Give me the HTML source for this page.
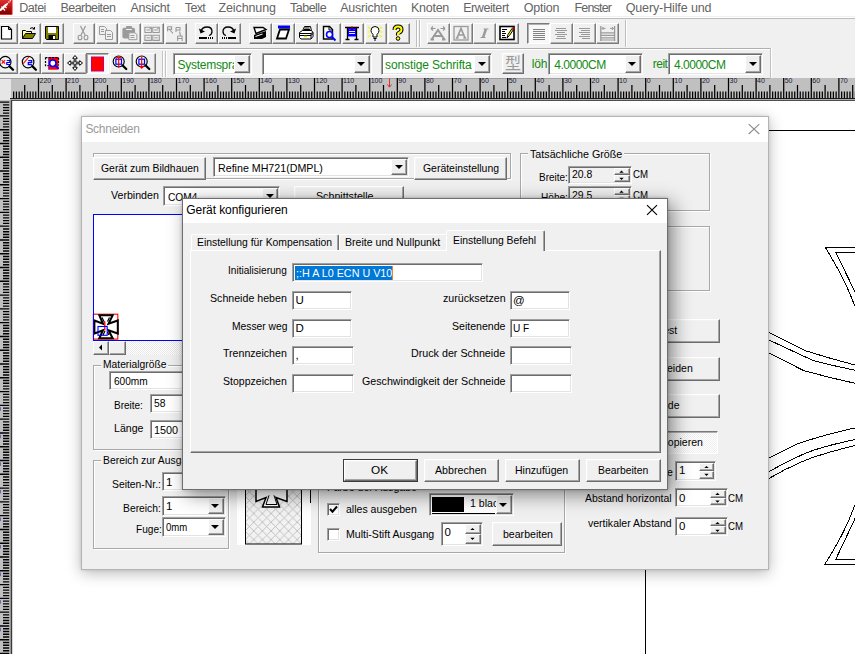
<!DOCTYPE html>
<html lang="de"><head><meta charset="utf-8"><title>Schneiden</title>
<style>
html,body{margin:0;padding:0;}
body{width:855px;height:654px;overflow:hidden;background:#fff;font-family:"Liberation Sans",sans-serif;position:relative;}
div,span,svg{position:absolute;box-sizing:border-box;}
.tb svg,.tbp svg{overflow:visible;}
.t{white-space:nowrap;display:block;transform-origin:0 0;}
.btn{background:#f0f0f0;border:1px solid;border-color:#fff #6d6d6d #6d6d6d #fff;box-shadow:inset -1px -1px 0 #a5a5a5,inset 1px 1px 0 #f4f4f4;}
.tb{background:#f0f0f0;border:1px solid;border-color:#fff #7a7a7a #7a7a7a #fff;box-shadow:inset -1px -1px 0 #b0b0b0;}
.tbp{background:#f8f8f8;border:1px solid;border-color:#7a7a7a #fff #fff #7a7a7a;box-shadow:inset 1px 1px 0 #b0b0b0;}
.sunk{background:#fff;border:1px solid;border-color:#a0a0a0 #fff #fff #a0a0a0;box-shadow:inset 1px 1px 0 #6d6d6d,inset -1px -1px 0 #e3e3e3;}
.grp{border:1px solid #a8a8a8;box-shadow:1px 1px 0 #fff, inset 1px 1px 0 #fff;}
.dd{background:#f0f0f0;border:1px solid;border-color:#fff #6d6d6d #6d6d6d #fff;box-shadow:inset -1px -1px 0 #a5a5a5;}
.dd:after{content:"";position:absolute;left:50%;top:50%;margin:-2px 0 0 -4.5px;border:4.5px solid transparent;border-top:4.5px solid #000;border-bottom:0;}
.spn:after,.nd:after{display:none;}
.clip{overflow:hidden;}
</style></head><body>

<svg width="855" height="654" viewBox="0 0 855 654" style="left:0;top:0" fill="none" stroke="#000" stroke-width="1" shape-rendering="crispEdges">
<path d="M769 130.5H855"/>
<path d="M645.5 569V654"/>
<path d="M856 247.400H825.300Q845 279 854.600 305.500"/>
<path d="M856 252.400H835.800L856 294"/>
<path d="M769 332.400L806.300 351Q830 358.500 856 365.300"/>
<path d="M769 340L813.200 360.600Q834 366 856 370.400"/>
<path d="M769 353L803.500 370.500Q830 378 856 383.500"/>
<path d="M769 458.200L796.600 444.100Q825 434.500 856 427.700"/>
<path d="M769 471.500Q785 462.500 802.200 454.700T856 439.400"/>
<path d="M769 478.400Q785 469 802.200 461.600T856 445.300"/>
<path d="M856 564.200H824.900Q846 531 854.600 505.500"/>
<path d="M856 559H835.900L856 516.500"/>
</svg>
<div class="" style="left:0px;top:0px;width:855px;height:16px;background:#fff;"></div>
<svg width="13" height="15" viewBox="0 0 13 15" style="left:0;top:0"><defs><linearGradient id="ag" x1="0" y1="0" x2="0" y2="1"><stop offset="0" stop-color="#e03030"/><stop offset="0.55" stop-color="#b01010"/><stop offset="1" stop-color="#700000"/></linearGradient></defs><rect width="12.200" height="14.500" fill="url(#ag)"/><path d="M12 0v14.500H0" stroke="#ff1010" stroke-width="0.800" fill="none"/><path d="M0 10.500L7 4" stroke="#fff" stroke-width="2.200" fill="none"/><path d="M7 4l4-4" stroke="#fff" stroke-width="1.400" stroke-dasharray="1.200 0.800" fill="none"/><path d="M1.500 6.500l3.500 4M4 5l2.500 3" stroke="#fff" stroke-width="1.200" fill="none"/></svg>
<span class="t " style="left:19.30px;top:1.52px;font-size:12.5px;line-height:12.5px;color:#646464;letter-spacing:-0.536px;">Datei</span>
<span class="t " style="left:60.50px;top:1.52px;font-size:12.5px;line-height:12.5px;color:#646464;letter-spacing:-0.566px;">Bearbeiten</span>
<span class="t " style="left:130.50px;top:1.52px;font-size:12.5px;line-height:12.5px;color:#646464;letter-spacing:-0.242px;">Ansicht</span>
<span class="t " style="left:184.80px;top:1.52px;font-size:12.5px;line-height:12.5px;color:#646464;letter-spacing:-0.656px;">Text</span>
<span class="t " style="left:218.50px;top:1.52px;font-size:12.5px;line-height:12.5px;color:#646464;letter-spacing:-0.108px;">Zeichnung</span>
<span class="t " style="left:290.00px;top:1.52px;font-size:12.5px;line-height:12.5px;color:#646464;letter-spacing:-0.502px;">Tabelle</span>
<span class="t " style="left:340.20px;top:1.52px;font-size:12.5px;line-height:12.5px;color:#646464;letter-spacing:-0.236px;">Ausrichten</span>
<span class="t " style="left:411.00px;top:1.52px;font-size:12.5px;line-height:12.5px;color:#646464;letter-spacing:-0.270px;">Knoten</span>
<span class="t " style="left:463.20px;top:1.52px;font-size:12.5px;line-height:12.5px;color:#646464;letter-spacing:-0.424px;">Erweitert</span>
<span class="t " style="left:523.70px;top:1.52px;font-size:12.5px;line-height:12.5px;color:#646464;letter-spacing:-0.222px;">Option</span>
<span class="t " style="left:574.40px;top:1.52px;font-size:12.5px;line-height:12.5px;color:#646464;letter-spacing:-0.797px;">Fenster</span>
<span class="t " style="left:625.70px;top:1.52px;font-size:12.5px;line-height:12.5px;color:#646464;letter-spacing:-0.123px;">Query-Hilfe und</span>
<div class="" style="left:0px;top:16px;width:855px;height:62px;background:#f0f0f0;"></div>
<div class="" style="left:0px;top:16.5px;width:855px;height:0.8px;background:#fff;"></div>
<div class="" style="left:0px;top:17.5px;width:855px;height:1px;background:#bcbcbc;"></div>
<div class="" style="left:0px;top:47.5px;width:771px;height:1px;background:#b0b0b0;"></div>
<div class="" style="left:0px;top:48.5px;width:771px;height:1px;background:#fff;"></div>
<div class="" style="left:770px;top:48px;width:1px;height:30px;background:#c0c0c0;"></div>
<div class="" style="left:771px;top:48px;width:1px;height:30px;background:#fff;"></div>
<div class="" style="left:416.2px;top:19.5px;width:1px;height:27.5px;background:#bdbdbd;"></div>
<div class="" style="left:417.2px;top:19.5px;width:1px;height:27.5px;background:#fff;"></div>
<div class="" style="left:419px;top:19.5px;width:1px;height:27.5px;background:#bdbdbd;"></div>
<div class="" style="left:420px;top:19.5px;width:1px;height:27.5px;background:#fff;"></div>
<div class="" style="left:625.2px;top:19.5px;width:1px;height:27.5px;background:#bdbdbd;"></div>
<div class="" style="left:626.2px;top:19.5px;width:1px;height:27.5px;background:#fff;"></div>
<div class="" style="left:162px;top:51px;width:1px;height:26px;background:#c4c4c4;"></div>
<div class="" style="left:163px;top:51px;width:1px;height:26px;background:#fff;"></div>
<div class="" style="left:165px;top:51px;width:1px;height:26px;background:#c4c4c4;"></div>
<div class="" style="left:166px;top:51px;width:1px;height:26px;background:#fff;"></div>
<div class="tb" style="left:-4.5px;top:22.7px;width:22.5px;height:21.3px;">
<svg width="16" height="16" viewBox="0 0 16 16" style="left:1.5px;top:1.3px"><path d="M3.500 1.500h7l3 3v9.500h-10z" fill="#fff" stroke="#000" stroke-width="1.200"/><path d="M10.500 1.500v3h3" fill="none" stroke="#000"/></svg></div>
<div class="tb" style="left:18.6px;top:22.7px;width:22.5px;height:21.3px;">
<svg width="16" height="16" viewBox="0 0 16 16" style="left:1.5px;top:1.3px"><path d="M1.5 13.5v-8h3l1 1h5v2" fill="#ffff9a" stroke="#000"/><path d="M1.5 13.5l3-5h10l-3 5z" fill="#808000" stroke="#000"/><path d="M9 3.5q2.5-2 4.500 .5M13.500 4v-2M13.500 4h-2" fill="none" stroke="#000"/></svg></div>
<div class="tb" style="left:41.5px;top:22.7px;width:22.5px;height:21.3px;">
<svg width="16" height="16" viewBox="0 0 16 16" style="left:1.5px;top:1.3px"><path d="M1.500 1.500h13v13h-12l-1-1z" fill="#808000" stroke="#000"/><rect x="4" y="2" width="8" height="6" fill="#fff"/><rect x="4.500" y="10" width="7" height="4.500" fill="#000"/><rect x="9" y="11" width="2" height="3" fill="#fff"/><rect x="12.500" y="2.500" width="1" height="1" fill="#000"/></svg></div>
<div class="tb" style="left:72.7px;top:22.7px;width:22.5px;height:21.3px;">
<svg width="16" height="16" viewBox="0 0 16 16" style="left:1.5px;top:1.3px"><path d="M5.500 1l4.500 9M10.500 1l-4.500 9" stroke="#9a9a9a" stroke-width="1.200" fill="none"/><ellipse cx="5" cy="12.500" rx="1.900" ry="2.300" fill="none" stroke="#9a9a9a" stroke-width="1.100"/><ellipse cx="11" cy="12.500" rx="1.900" ry="2.300" fill="none" stroke="#9a9a9a" stroke-width="1.100"/></svg></div>
<div class="tb" style="left:95.6px;top:22.7px;width:22.5px;height:21.3px;">
<svg width="16" height="16" viewBox="0 0 16 16" style="left:1.5px;top:1.3px"><path d="M1.500 1.500h5l2 2v6h-7z" fill="#f0f0f0" stroke="#9a9a9a"/><path d="M7.500 5.500h5l2 2v7h-7z" fill="#f0f0f0" stroke="#9a9a9a"/><path d="M3 4.500h3M3 6.500h3M9 9.500h4M9 11.500h4" stroke="#9a9a9a"/></svg></div>
<div class="tb" style="left:118.6px;top:22.7px;width:22.5px;height:21.3px;">
<svg width="16" height="16" viewBox="0 0 16 16" style="left:1.5px;top:1.3px"><rect x="1.400" y="2.700" width="12.600" height="10.800" rx="1.800" fill="#9a9a9a"/><rect x="5" y="1" width="6" height="2.500" rx="0.800" fill="#9a9a9a"/><path d="M5 4.500h6" stroke="#ececec" stroke-width="1.100"/><path d="M7.900 7.800h6l2 1.600v5.300h-8z" fill="#f0f0f0" stroke="#9a9a9a"/><path d="M9.500 10.500h4M9.500 12.500h4" stroke="#9a9a9a"/></svg></div>
<div class="tb" style="left:141.5px;top:22.7px;width:22.5px;height:21.3px;">
<svg width="16" height="16" viewBox="0 0 16 16" style="left:1.5px;top:1.3px"><path d="M.9 2.300h6.500v5.200h-6.500zM8.800 2.300h6.500v5.200h-6.500zM.9 10.200h6.500v5.200h-6.500zM8.800 10.200h6.500v5.200h-6.500z" fill="none" stroke="#9a9a9a" stroke-width="1.100"/><path d="M2.500 5h3.500M10.300 5h3.500M2.500 12.800h3.500M10.300 12.800h3.500M5.500 3.500h1.500M13.300 3.500h1.500" fill="none" stroke="#9a9a9a"/></svg></div>
<div class="tb" style="left:164.6px;top:22.7px;width:22.5px;height:21.3px;">
<svg width="16" height="16" viewBox="0 0 16 16" style="left:1.5px;top:1.3px"><path d="M.6 1.800h4v3.300M.6 1.800v4.500M.6 4.300h3.500M2.500 4.500l3.500 3.800M9 2.500h4v3.300M9 2.500v4.500M9 5h3.500M12.500 6.500l1 4M10.600 11h4.500v5M10.600 11v5M10.600 13.500h4.500" fill="none" stroke="#9a9a9a" stroke-width="1.100"/></svg></div>
<div class="tb" style="left:195.3px;top:22.7px;width:22.5px;height:21.3px;">
<svg width="16" height="16" viewBox="0 0 16 16" style="left:1.5px;top:1.3px"><path d="M3 6.500q1-4.500 6-4.500t5 4.500q0 3-3 4" fill="none" stroke="#000" stroke-width="1.300"/><path d="M1 3.500l1.500 5 4.500-2z" fill="#000"/><path d="M1 13h8" stroke="#000" stroke-width="2"/><path d="M10 13h5" stroke="#000" stroke-width="2" stroke-dasharray="1 1"/></svg></div>
<div class="tb" style="left:218.4px;top:22.7px;width:22.5px;height:21.3px;">
<svg width="16" height="16" viewBox="0 0 16 16" style="left:1.5px;top:1.3px"><path d="M13 6.500q-1-4.500-6-4.500t-5 4.500q0 3 3 4" fill="none" stroke="#000" stroke-width="1.300"/><path d="M15 3.500l-1.500 5-4.500-2z" fill="#000"/><path d="M7 13h8" stroke="#000" stroke-width="2"/><path d="M1 13h5" stroke="#000" stroke-width="2" stroke-dasharray="1 1"/></svg></div>
<div class="tb" style="left:249.3px;top:22.7px;width:22.5px;height:21.3px;">
<svg width="16" height="16" viewBox="0 0 16 16" style="left:1.5px;top:1.3px"><path d="M2 2.500h9l3 2-10 4z" fill="#fff" stroke="#000" stroke-width="1.400"/><path d="M2 10l12-4v6l-4 2h-8z" fill="#000"/><path d="M3.500 11.500l7-2.500" stroke="#fff"/></svg></div>
<div class="tb" style="left:272.3px;top:22.7px;width:22.5px;height:21.3px;">
<svg width="16" height="16" viewBox="0 0 16 16" style="left:1.5px;top:1.3px"><path d="M3 2h12" stroke="#0000ff" stroke-width="3"/><path d="M5 4.500h9l-3 9h-9z" fill="#fff" stroke="#000" stroke-width="1.800"/></svg></div>
<div class="tb" style="left:295.4px;top:22.7px;width:22.5px;height:21.3px;">
<svg width="16" height="16" viewBox="0 0 16 16" style="left:1.5px;top:1.3px"><path d="M4.500 6l2-4.500h6l1 4.500" fill="#fff" stroke="#000"/><path d="M6.500 3h5M6 4.500h6" stroke="#000"/><path d="M1.500 7.500l3-2h9l1.500 2v4l-2 2.500h-10l-1.500-1.500z" fill="#fff" stroke="#000"/><path d="M1.500 8.500h11.500l2-1M1.500 10.500h11.500l2-2M13 8.500v5" fill="none" stroke="#000"/><path d="M6 11.500h3" stroke="#e0e000" stroke-width="1.500"/></svg></div>
<div class="tb" style="left:318.4px;top:22.7px;width:22.5px;height:21.3px;">
<svg width="16" height="16" viewBox="0 0 16 16" style="left:1.5px;top:1.3px"><path d="M2.500 1.500h6l3 3v9.500h-9z" fill="#fff" stroke="#000" stroke-width="1.400"/><path d="M8 1.500v3.500h3.500" fill="none" stroke="#000"/><circle cx="8.500" cy="9.500" r="3" fill="#fff" stroke="#0000ff" stroke-width="1.600"/><path d="M11 12l3.500 3.500" stroke="#0000ff" stroke-width="2"/></svg></div>
<div class="tb" style="left:341.5px;top:22.7px;width:22.5px;height:21.3px;">
<svg width="16" height="16" viewBox="0 0 16 16" style="left:1.5px;top:1.3px"><path d="M1 2.500h14M3.500 2.500v12M12.500 2.500v12M1.500 14.500h4M10.500 14.500h4" stroke="#000" stroke-width="1.300" fill="none"/><rect x="4" y="3" width="8" height="8.500" fill="#0000ff"/><path d="M5 6.500h6M5 8.500h6" stroke="#f0f0f0"/><path d="M5 4.500h1.500M9.500 4.500h1.500M8 1v2" stroke="#ff0000"/></svg></div>
<div class="tb" style="left:364.5px;top:22.7px;width:22.5px;height:21.3px;">
<svg width="16" height="16" viewBox="0 0 16 16" style="left:1.5px;top:1.3px"><path d="M8 1.500q4 0 4 4 0 2-2 4v2.500h-4v-2.500q-2-2-2-4 0-4 4-4z" fill="#fff" stroke="#000"/><path d="M6.500 13.500h3M7 15h2" stroke="#000"/><path d="M1 2l2.500 2M0.500 7h2.500M1 12l2.500-2M15 2l-2.500 2M15.500 7h-2.500M15 12l-2.500-2" stroke="#f4f400" stroke-width="1.200"/></svg></div>
<div class="tb" style="left:387.5px;top:22.7px;width:22.5px;height:21.3px;">
<svg width="16" height="16" viewBox="0 0 16 16" style="left:1.5px;top:1.3px"><path d="M4.500 5q0-3.500 3.500-3.500t3.500 3q0 2-2 3t-1.500 2.500" fill="none" stroke="#000" stroke-width="4"/><path d="M4.500 5q0-3.500 3.500-3.500t3.500 3q0 2-2 3t-1.500 2.500" fill="none" stroke="#ffff00" stroke-width="2"/><circle cx="8" cy="13.500" r="1.800" fill="#ffff00" stroke="#000"/></svg></div>
<div class="tb" style="left:427.4px;top:22.7px;width:22.5px;height:21.3px;">
<svg width="16" height="16" viewBox="0 0 16 16" style="left:1.5px;top:1.3px"><path d="M1.500 14.500l6.500-9.500 6.500 9.500M0.500 14.500h3.500M12 14.500h3.500M4.500 11h7" fill="none" stroke="#9a9a9a" stroke-width="2"/><path d="M1 3.500h4.500M10.500 3.500h4.500M1 3.500l2-2M1 3.500l2 2M15 3.500l-2-2M15 3.500l-2 2" stroke="#9a9a9a" stroke-width="1.200" fill="none"/></svg></div>
<div class="tb" style="left:450.4px;top:22.7px;width:22.5px;height:21.3px;">
<svg width="16" height="16" viewBox="0 0 16 16" style="left:1.5px;top:1.3px"><rect x="1" y="1.500" width="14" height="13.500" fill="none" stroke="#9a9a9a" stroke-width="1.300"/><path d="M4 13l4-9.500 4 9.500M5.300 10h5.400M2.800 13h2.800M10.400 13h2.800" fill="none" stroke="#9a9a9a" stroke-width="1.700"/></svg></div>
<div class="tb" style="left:473.3px;top:22.7px;width:22.5px;height:21.3px;">
<svg width="16" height="16" viewBox="0 0 16 16" style="left:1.5px;top:1.3px"><path d="M7.500 4h5M4.500 12.500h5" stroke="#9a9a9a" stroke-width="1.100"/><path d="M10 4l-3 8.500" stroke="#9a9a9a" stroke-width="2.400"/></svg></div>
<div class="tb" style="left:496.4px;top:22.7px;width:22.5px;height:21.3px;">
<svg width="16" height="16" viewBox="0 0 16 16" style="left:1.5px;top:1.3px"><rect x="1" y="1.500" width="14" height="13" fill="#fff" stroke="#000" stroke-width="1.600"/><path d="M3 4.500h5M3 6.500h3M3 8.500h4M3 10.500h3M3 12.500h4" stroke="#000"/><path d="M8 13l1-3.500 4-6 1.500 1-4 6z" fill="#ffff00" stroke="#000"/><path d="M12.500 3.500l1.500-1.500 1 1-1 2z" fill="#e00000"/></svg></div>
<div class="tbp" style="left:527px;top:22.7px;width:22.5px;height:21.3px;">
<svg width="16" height="16" viewBox="0 0 16 16" style="left:2.8px;top:2.8px"><path d="M2 3.500h12M2 5.500h12M2 7.500h12M2 9.500h12M2 11.500h12M2 13.500h12" stroke="#808080"/></svg></div>
<div class="tb" style="left:550px;top:22.7px;width:22.5px;height:21.3px;">
<svg width="16" height="16" viewBox="0 0 16 16" style="left:1.5px;top:1.3px"><path d="M3 3.500h10M2 5.500h12M4 7.500h8M2 9.500h12M4 11.500h8M3 13.500h10" stroke="#9a9a9a"/></svg></div>
<div class="tb" style="left:573.2px;top:22.7px;width:22.5px;height:21.3px;">
<svg width="16" height="16" viewBox="0 0 16 16" style="left:1.5px;top:1.3px"><path d="M3 3.500h11M5 5.500h9M3 7.500h11M5 9.500h9M3 11.500h11M6 13.500h8" stroke="#9a9a9a"/></svg></div>
<div class="tb" style="left:596.4px;top:22.7px;width:22.5px;height:21.3px;">
<svg width="16" height="16" viewBox="0 0 16 16" style="left:1.5px;top:1.3px"><path d="M1.800 1v15M15.600 1v15" stroke="#9a9a9a" stroke-width="1.300"/><path d="M2 7.900h13.500M2 10.400h13.500M2 12.900h13.500M2 15h13.500" stroke="#9a9a9a" stroke-width="1.200"/><path d="M3 3.400h3.500M11 3.400h3.500M3 3.400l1.600-1.600M3 3.400l1.600 1.600M14.500 3.400l-1.600-1.600M14.500 3.400l-1.600 1.600" stroke="#9a9a9a" fill="none"/></svg></div>
<div class="tb" style="left:-4.5px;top:52.7px;width:22.5px;height:21.3px;">
<svg width="16" height="16" viewBox="0 0 16 16" style="left:0.4px;top:0.2px"><circle cx="8.3" cy="8.1" r="5.7" fill="#f4f4f4" stroke="#000" stroke-width="1.150"/><path d="M4.700 6.200l3.400 3.400M8.100 6.200l-3.400 3.400" stroke="#ff0000" stroke-width="1.200"/><path d="M9.800 6.500h3v2h-3v2h3.200" fill="none" stroke="#0000ff" stroke-width="1.200"/><path d="M12.404 12.204L16.004 15.804" stroke="#000" stroke-width="2.300" stroke-linecap="round"/></svg></div>
<div class="tb" style="left:18.7px;top:52.7px;width:22.5px;height:21.3px;">
<svg width="16" height="16" viewBox="0 0 16 16" style="left:0.4px;top:0.2px"><circle cx="8.1" cy="8" r="5.8" fill="#f4f4f4" stroke="#000" stroke-width="1.150"/><path d="M8.900 3L3.200 9.600" stroke="#ff0000" stroke-width="1.100"/><path d="M8.300 6.500h3.400v2.100h-3.400v2.100h3.600" fill="none" stroke="#0000ff" stroke-width="1.250"/><path d="M12.276 12.176L15.876 15.776" stroke="#000" stroke-width="2.300" stroke-linecap="round"/></svg></div>
<div class="tb" style="left:41.2px;top:52.7px;width:22.5px;height:21.3px;">
<svg width="16" height="16" viewBox="0 0 16 16" style="left:0.4px;top:0.2px"><rect x="5.700" y="3" width="9.800" height="12.700" fill="#ff0000"/><path d="M5.700 3v12.700" stroke="#5000c0" stroke-width="0.800"/><path d="M2.500 3.600h13v8M2.500 3.600v8h3" fill="none" stroke="#000" stroke-width="1.200" stroke-dasharray="2 1.300"/><circle cx="9.800" cy="9.200" r="3.200" fill="#fff" stroke="#0000ff" stroke-width="1.500"/><path d="M12.200 11.600l2.900 2.500" stroke="#0000ff" stroke-width="1.900" stroke-linecap="round"/></svg></div>
<div class="tb" style="left:64.2px;top:52.7px;width:22.5px;height:21.3px;">
<svg width="16" height="16" viewBox="0 0 16 16" style="left:1.5px;top:1.3px"><path d="M8 .5L10.300 3.300H8.800V7.200H12.700V5.700L15.500 8 12.700 10.300V8.800H8.800V12.700H10.300L8 15.500 5.700 12.700H7.200V8.800H3.300V10.300L.5 8 3.300 5.700V7.200H7.200V3.300H5.700Z" fill="#fff" stroke="#000" stroke-width="1"/></svg></div>
<div class="tbp" style="left:86.3px;top:52.7px;width:22.5px;height:21.3px;">
<svg width="16" height="16" viewBox="0 0 16 16" style="left:2.8px;top:2.8px"><rect x="1.500" y="1" width="12" height="14" fill="#ff0000" stroke="#c0007a" stroke-width="1"/></svg></div>
<div class="tb" style="left:110.4px;top:52.7px;width:22.5px;height:21.3px;">
<svg width="16" height="16" viewBox="0 0 16 16" style="left:0.4px;top:0.2px"><circle cx="6.7" cy="7.5" r="5.5" fill="#f4f4f4" stroke="#000" stroke-width="1.150"/><rect x="3.900" y="5.200" width="5.600" height="5" fill="none" stroke="#0000ff" stroke-width="1.200"/><path d="M6.700 2.500v11M3.800 4.500q2.900-2.600 5.800 0" stroke="#ff0000" fill="none" stroke-width="1.150"/><path d="M10.66 11.46L14.26 15.06" stroke="#000" stroke-width="2.300" stroke-linecap="round"/></svg></div>
<div class="tb" style="left:133.5px;top:52.7px;width:22.5px;height:21.3px;">
<svg width="16" height="16" viewBox="0 0 16 16" style="left:0.4px;top:0.2px"><circle cx="6.7" cy="7.5" r="5.5" fill="#f4f4f4" stroke="#000" stroke-width="1.150"/><rect x="3.900" y="5.200" width="5.600" height="5" fill="none" stroke="#0000ff" stroke-width="1.200"/><path d="M6.700 2.800v11M4.700 11.800l2 2.300 2-2.300" stroke="#ff0000" fill="none" stroke-width="1.150"/><path d="M10.66 11.46L14.26 15.06" stroke="#000" stroke-width="2.300" stroke-linecap="round"/></svg></div>
<div class="sunk" style="left:173px;top:53px;width:78.8px;height:22.3px;"></div>
<div class="clip" style="left:175px;top:55px;width:58.8px;height:18.3px;">
<span class="t " style="left:2.50px;top:3.94px;font-size:12px;line-height:12px;color:#108a10;letter-spacing:-0.269px;">Systemsprache</span>
</div>
<div class="dd" style="left:233.8px;top:55px;width:16px;height:18.3px;"></div>
<div class="sunk" style="left:261.5px;top:53px;width:110.2px;height:22.3px;"></div>
<div class="dd" style="left:353.7px;top:55px;width:16px;height:18.3px;"></div>
<div class="sunk" style="left:381px;top:53px;width:111px;height:22.3px;"></div>
<div class="clip" style="left:383px;top:55px;width:89.3px;height:18.3px;">
<span class="t " style="left:2.10px;top:3.94px;font-size:12px;line-height:12px;color:#108a10;letter-spacing:-0.129px;">sonstige Schriftart</span>
</div>
<div class="dd" style="left:474px;top:55px;width:16px;height:18.3px;"></div>
<div class="btn" style="left:501.5px;top:53px;width:22.5px;height:21px;"></div>
<span class="t " style="left:505.00px;top:56.46px;font-size:16px;line-height:16px;color:#9a9a9a;font-family:'Liberation Sans','Noto Sans CJK SC',sans-serif;">型</span>
<span class="t " style="left:531.80px;top:58.34px;font-size:12px;line-height:12px;color:#108a10;letter-spacing:-0.138px;">löh</span>
<div class="sunk" style="left:548px;top:53px;width:94.7px;height:22.3px;"></div>
<div class="clip" style="left:550px;top:55px;width:74.7px;height:18.3px;">
<span class="t " style="left:4.30px;top:3.54px;font-size:12px;line-height:12px;color:#108a10;letter-spacing:-0.496px;">4.0000CM</span>
</div>
<div class="dd" style="left:624.7px;top:55px;width:16px;height:18.3px;"></div>
<span class="t " style="left:652.70px;top:58.34px;font-size:12px;line-height:12px;color:#108a10;letter-spacing:-0.468px;">reit</span>
<div class="sunk" style="left:668px;top:53px;width:95.3px;height:22.3px;"></div>
<div class="clip" style="left:670px;top:55px;width:75.3px;height:18.3px;">
<span class="t " style="left:4.00px;top:3.54px;font-size:12px;line-height:12px;color:#108a10;letter-spacing:-0.483px;">4.0000CM</span>
</div>
<div class="dd" style="left:745.3px;top:55px;width:16px;height:18.3px;"></div>
<div class="" style="left:0px;top:78px;width:855px;height:23px;background:#c0c0c0;"></div>
<div class="" style="left:10.7px;top:99.8px;width:844.3px;height:1.3px;background:#505050;"></div>
<div class="" style="left:0px;top:78px;width:10.5px;height:22.5px;background:#e6e6e6;"></div>
<div class="" style="left:0px;top:77.5px;width:770px;height:0.8px;background:#a0a0a0;"></div>
<svg width="855" height="22" viewBox="0 78 855 22" style="left:0;top:78px"><rect x="10" y="98.100" width="845" height="1.100" fill="#101010"/><rect x="10" y="99.200" width="845" height="0.700" fill="#b4b4b4"/><path d="M838.90 78V98.500M811.30 78V98.500M783.70 78V98.500M756.10 78V98.500M728.50 78V98.500M700.90 78V98.500M673.30 78V98.500M645.70 78V98.500M618.10 78V98.500M590.50 78V98.500M562.90 78V98.500M535.30 78V98.500M507.70 78V98.500M480.10 78V98.500M452.50 78V98.500M424.90 78V98.500M397.30 78V98.500M369.70 78V98.500M342.10 78V98.500M314.50 78V98.500M286.90 78V98.500M259.30 78V98.500M231.70 78V98.500M204.10 78V98.500M176.50 78V98.500M148.90 78V98.500M121.30 78V98.500M93.70 78V98.500M66.10 78V98.500M38.50 78V98.500M852.70 85V98.500M825.10 85V98.500M797.50 85V98.500M769.90 85V98.500M742.30 85V98.500M714.70 85V98.500M687.10 85V98.500M659.50 85V98.500M631.90 85V98.500M604.30 85V98.500M576.70 85V98.500M549.10 85V98.500M521.50 85V98.500M493.90 85V98.500M466.30 85V98.500M438.70 85V98.500M411.10 85V98.500M383.50 85V98.500M355.90 85V98.500M328.30 85V98.500M300.70 85V98.500M273.10 85V98.500M245.50 85V98.500M217.90 85V98.500M190.30 85V98.500M162.70 85V98.500M135.10 85V98.500M107.50 85V98.500M79.90 85V98.500M52.30 85V98.500M24.70 85V98.500M855.46 91.600V98.500M849.94 91.600V98.500M847.18 91.600V98.500M844.42 91.600V98.500M841.66 91.600V98.500M836.14 91.600V98.500M833.38 91.600V98.500M830.62 91.600V98.500M827.86 91.600V98.500M822.34 91.600V98.500M819.58 91.600V98.500M816.82 91.600V98.500M814.06 91.600V98.500M808.54 91.600V98.500M805.78 91.600V98.500M803.02 91.600V98.500M800.26 91.600V98.500M794.74 91.600V98.500M791.98 91.600V98.500M789.22 91.600V98.500M786.46 91.600V98.500M780.94 91.600V98.500M778.18 91.600V98.500M775.42 91.600V98.500M772.66 91.600V98.500M767.14 91.600V98.500M764.38 91.600V98.500M761.62 91.600V98.500M758.86 91.600V98.500M753.34 91.600V98.500M750.58 91.600V98.500M747.82 91.600V98.500M745.06 91.600V98.500M739.54 91.600V98.500M736.78 91.600V98.500M734.02 91.600V98.500M731.26 91.600V98.500M725.74 91.600V98.500M722.98 91.600V98.500M720.22 91.600V98.500M717.46 91.600V98.500M711.94 91.600V98.500M709.18 91.600V98.500M706.42 91.600V98.500M703.66 91.600V98.500M698.14 91.600V98.500M695.38 91.600V98.500M692.62 91.600V98.500M689.86 91.600V98.500M684.34 91.600V98.500M681.58 91.600V98.500M678.82 91.600V98.500M676.06 91.600V98.500M670.54 91.600V98.500M667.78 91.600V98.500M665.02 91.600V98.500M662.26 91.600V98.500M656.74 91.600V98.500M653.98 91.600V98.500M651.22 91.600V98.500M648.46 91.600V98.500M642.94 91.600V98.500M640.18 91.600V98.500M637.42 91.600V98.500M634.66 91.600V98.500M629.14 91.600V98.500M626.38 91.600V98.500M623.62 91.600V98.500M620.86 91.600V98.500M615.34 91.600V98.500M612.58 91.600V98.500M609.82 91.600V98.500M607.06 91.600V98.500M601.54 91.600V98.500M598.78 91.600V98.500M596.02 91.600V98.500M593.26 91.600V98.500M587.74 91.600V98.500M584.98 91.600V98.500M582.22 91.600V98.500M579.46 91.600V98.500M573.94 91.600V98.500M571.18 91.600V98.500M568.42 91.600V98.500M565.66 91.600V98.500M560.14 91.600V98.500M557.38 91.600V98.500M554.62 91.600V98.500M551.86 91.600V98.500M546.34 91.600V98.500M543.58 91.600V98.500M540.82 91.600V98.500M538.06 91.600V98.500M532.54 91.600V98.500M529.78 91.600V98.500M527.02 91.600V98.500M524.26 91.600V98.500M518.74 91.600V98.500M515.98 91.600V98.500M513.22 91.600V98.500M510.46 91.600V98.500M504.94 91.600V98.500M502.18 91.600V98.500M499.42 91.600V98.500M496.66 91.600V98.500M491.14 91.600V98.500M488.38 91.600V98.500M485.62 91.600V98.500M482.86 91.600V98.500M477.34 91.600V98.500M474.58 91.600V98.500M471.82 91.600V98.500M469.06 91.600V98.500M463.54 91.600V98.500M460.78 91.600V98.500M458.02 91.600V98.500M455.26 91.600V98.500M449.74 91.600V98.500M446.98 91.600V98.500M444.22 91.600V98.500M441.46 91.600V98.500M435.94 91.600V98.500M433.18 91.600V98.500M430.42 91.600V98.500M427.66 91.600V98.500M422.14 91.600V98.500M419.38 91.600V98.500M416.62 91.600V98.500M413.86 91.600V98.500M408.34 91.600V98.500M405.58 91.600V98.500M402.82 91.600V98.500M400.06 91.600V98.500M394.54 91.600V98.500M391.78 91.600V98.500M389.02 91.600V98.500M386.26 91.600V98.500M380.74 91.600V98.500M377.98 91.600V98.500M375.22 91.600V98.500M372.46 91.600V98.500M366.94 91.600V98.500M364.18 91.600V98.500M361.42 91.600V98.500M358.66 91.600V98.500M353.14 91.600V98.500M350.38 91.600V98.500M347.62 91.600V98.500M344.86 91.600V98.500M339.34 91.600V98.500M336.58 91.600V98.500M333.82 91.600V98.500M331.06 91.600V98.500M325.54 91.600V98.500M322.78 91.600V98.500M320.02 91.600V98.500M317.26 91.600V98.500M311.74 91.600V98.500M308.98 91.600V98.500M306.22 91.600V98.500M303.46 91.600V98.500M297.94 91.600V98.500M295.18 91.600V98.500M292.42 91.600V98.500M289.66 91.600V98.500M284.14 91.600V98.500M281.38 91.600V98.500M278.62 91.600V98.500M275.86 91.600V98.500M270.34 91.600V98.500M267.58 91.600V98.500M264.82 91.600V98.500M262.06 91.600V98.500M256.54 91.600V98.500M253.78 91.600V98.500M251.02 91.600V98.500M248.26 91.600V98.500M242.74 91.600V98.500M239.98 91.600V98.500M237.22 91.600V98.500M234.46 91.600V98.500M228.94 91.600V98.500M226.18 91.600V98.500M223.42 91.600V98.500M220.66 91.600V98.500M215.14 91.600V98.500M212.38 91.600V98.500M209.62 91.600V98.500M206.86 91.600V98.500M201.34 91.600V98.500M198.58 91.600V98.500M195.82 91.600V98.500M193.06 91.600V98.500M187.54 91.600V98.500M184.78 91.600V98.500M182.02 91.600V98.500M179.26 91.600V98.500M173.74 91.600V98.500M170.98 91.600V98.500M168.22 91.600V98.500M165.46 91.600V98.500M159.94 91.600V98.500M157.18 91.600V98.500M154.42 91.600V98.500M151.66 91.600V98.500M146.14 91.600V98.500M143.38 91.600V98.500M140.62 91.600V98.500M137.86 91.600V98.500M132.34 91.600V98.500M129.58 91.600V98.500M126.82 91.600V98.500M124.06 91.600V98.500M118.54 91.600V98.500M115.78 91.600V98.500M113.02 91.600V98.500M110.26 91.600V98.500M104.74 91.600V98.500M101.98 91.600V98.500M99.22 91.600V98.500M96.46 91.600V98.500M90.94 91.600V98.500M88.18 91.600V98.500M85.42 91.600V98.500M82.66 91.600V98.500M77.14 91.600V98.500M74.38 91.600V98.500M71.62 91.600V98.500M68.86 91.600V98.500M63.34 91.600V98.500M60.58 91.600V98.500M57.82 91.600V98.500M55.06 91.600V98.500M49.54 91.600V98.500M46.78 91.600V98.500M44.02 91.600V98.500M41.26 91.600V98.500M35.74 91.600V98.500M32.98 91.600V98.500M30.22 91.600V98.500M27.46 91.600V98.500M21.94 91.600V98.500M19.18 91.600V98.500M16.42 91.600V98.500M13.66 91.600V98.500" stroke="#000" stroke-width="1.250" fill="none"/><text x="839.90" y="83.200" font-size="7" fill="#1a1a3a" font-family="Liberation Sans, sans-serif">70</text><text x="812.30" y="83.200" font-size="7" fill="#1a1a3a" font-family="Liberation Sans, sans-serif">60</text><text x="784.70" y="83.200" font-size="7" fill="#1a1a3a" font-family="Liberation Sans, sans-serif">50</text><text x="757.10" y="83.200" font-size="7" fill="#1a1a3a" font-family="Liberation Sans, sans-serif">40</text><text x="729.50" y="83.200" font-size="7" fill="#1a1a3a" font-family="Liberation Sans, sans-serif">30</text><text x="701.90" y="83.200" font-size="7" fill="#1a1a3a" font-family="Liberation Sans, sans-serif">20</text><text x="674.30" y="83.200" font-size="7" fill="#1a1a3a" font-family="Liberation Sans, sans-serif">10</text><text x="646.70" y="83.200" font-size="7" fill="#1a1a3a" font-family="Liberation Sans, sans-serif">0</text><text x="619.10" y="83.200" font-size="7" fill="#1a1a3a" font-family="Liberation Sans, sans-serif">10</text><text x="591.50" y="83.200" font-size="7" fill="#1a1a3a" font-family="Liberation Sans, sans-serif">20</text><text x="563.90" y="83.200" font-size="7" fill="#1a1a3a" font-family="Liberation Sans, sans-serif">30</text><text x="536.30" y="83.200" font-size="7" fill="#1a1a3a" font-family="Liberation Sans, sans-serif">40</text><text x="508.70" y="83.200" font-size="7" fill="#1a1a3a" font-family="Liberation Sans, sans-serif">50</text><text x="481.10" y="83.200" font-size="7" fill="#1a1a3a" font-family="Liberation Sans, sans-serif">60</text><text x="453.50" y="83.200" font-size="7" fill="#1a1a3a" font-family="Liberation Sans, sans-serif">70</text><text x="425.90" y="83.200" font-size="7" fill="#1a1a3a" font-family="Liberation Sans, sans-serif">80</text><text x="398.30" y="83.200" font-size="7" fill="#1a1a3a" font-family="Liberation Sans, sans-serif">90</text><text x="370.70" y="83.200" font-size="7" fill="#1a1a3a" font-family="Liberation Sans, sans-serif">100</text><text x="343.10" y="83.200" font-size="7" fill="#1a1a3a" font-family="Liberation Sans, sans-serif">110</text><text x="315.50" y="83.200" font-size="7" fill="#1a1a3a" font-family="Liberation Sans, sans-serif">120</text><text x="287.90" y="83.200" font-size="7" fill="#1a1a3a" font-family="Liberation Sans, sans-serif">130</text><text x="260.30" y="83.200" font-size="7" fill="#1a1a3a" font-family="Liberation Sans, sans-serif">140</text><text x="232.70" y="83.200" font-size="7" fill="#1a1a3a" font-family="Liberation Sans, sans-serif">150</text><text x="205.10" y="83.200" font-size="7" fill="#1a1a3a" font-family="Liberation Sans, sans-serif">160</text><text x="177.50" y="83.200" font-size="7" fill="#1a1a3a" font-family="Liberation Sans, sans-serif">170</text><text x="149.90" y="83.200" font-size="7" fill="#1a1a3a" font-family="Liberation Sans, sans-serif">180</text><text x="122.30" y="83.200" font-size="7" fill="#1a1a3a" font-family="Liberation Sans, sans-serif">190</text><text x="94.70" y="83.200" font-size="7" fill="#1a1a3a" font-family="Liberation Sans, sans-serif">200</text><text x="67.10" y="83.200" font-size="7" fill="#1a1a3a" font-family="Liberation Sans, sans-serif">210</text><text x="39.50" y="83.200" font-size="7" fill="#1a1a3a" font-family="Liberation Sans, sans-serif">220</text><path d="M389.5 78.500V87M387.500 84.500l2 2.700 2-2.700" stroke="#e03030" stroke-width="1" fill="none"/></svg>
<svg width="13" height="554" viewBox="0 100 13 554" style="left:0;top:100px"><rect x="0" y="100" width="10" height="554" fill="#c0c0c0"/><rect x="9.600" y="100.500" width="1.200" height="556" fill="#b0b0b0"/><rect x="10.700" y="99.800" width="1.500" height="556" fill="#3a3a3a"/><path d="M0 102.11H9.200M3 104.87H9.200M3 107.62H9.200M3 110.38H9.200M3 113.14H9.200M0 115.89H9.200M3 118.65H9.200M3 121.41H9.200M3 124.17H9.200M3 126.92H9.200M0 129.68H9.200M3 132.44H9.200M3 135.19H9.200M3 137.95H9.200M3 140.71H9.200M0 143.46H9.200M3 146.22H9.200M3 148.98H9.200M3 151.74H9.200M3 154.49H9.200M0 157.25H9.200M3 160.01H9.200M3 162.76H9.200M3 165.52H9.200M3 168.28H9.200M0 171.03H9.200M3 173.79H9.200M3 176.55H9.200M3 179.31H9.200M3 182.06H9.200M0 184.82H9.200M3 187.58H9.200M3 190.33H9.200M3 193.09H9.200M3 195.85H9.200M0 198.60H9.200M3 201.36H9.200M3 204.12H9.200M3 206.88H9.200M3 209.63H9.200M0 212.39H9.200M3 215.15H9.200M3 217.90H9.200M3 220.66H9.200M3 223.42H9.200M0 226.17H9.200M3 228.93H9.200M3 231.69H9.200M3 234.45H9.200M3 237.20H9.200M0 239.96H9.200M3 242.72H9.200M3 245.47H9.200M3 248.23H9.200M3 250.99H9.200M0 253.74H9.200M3 256.50H9.200M3 259.26H9.200M3 262.02H9.200M3 264.77H9.200M0 267.53H9.200M3 270.29H9.200M3 273.04H9.200M3 275.80H9.200M3 278.56H9.200M0 281.31H9.200M3 284.07H9.200M3 286.83H9.200M3 289.59H9.200M3 292.34H9.200M0 295.10H9.200M3 297.86H9.200M3 300.61H9.200M3 303.37H9.200M3 306.13H9.200M0 308.88H9.200M3 311.64H9.200M3 314.40H9.200M3 317.16H9.200M3 319.91H9.200M0 322.67H9.200M3 325.43H9.200M3 328.18H9.200M3 330.94H9.200M3 333.70H9.200M0 336.45H9.200M3 339.21H9.200M3 341.97H9.200M3 344.73H9.200M3 347.48H9.200M0 350.24H9.200M3 353.00H9.200M3 355.75H9.200M3 358.51H9.200M3 361.27H9.200M0 364.02H9.200M3 366.78H9.200M3 369.54H9.200M3 372.30H9.200M3 375.05H9.200M0 377.81H9.200M3 380.57H9.200M3 383.32H9.200M3 386.08H9.200M3 388.84H9.200M0 391.59H9.200M3 394.35H9.200M3 397.11H9.200M3 399.87H9.200M3 402.62H9.200M0 405.38H9.200M3 408.14H9.200M3 410.89H9.200M3 413.65H9.200M3 416.41H9.200M0 419.16H9.200M3 421.92H9.200M3 424.68H9.200M3 427.44H9.200M3 430.19H9.200M0 432.95H9.200M3 435.71H9.200M3 438.46H9.200M3 441.22H9.200M3 443.98H9.200M0 446.73H9.200M3 449.49H9.200M3 452.25H9.200M3 455.01H9.200M3 457.76H9.200M0 460.52H9.200M3 463.28H9.200M3 466.03H9.200M3 468.79H9.200M3 471.55H9.200M0 474.30H9.200M3 477.06H9.200M3 479.82H9.200M3 482.58H9.200M3 485.33H9.200M0 488.09H9.200M3 490.85H9.200M3 493.60H9.200M3 496.36H9.200M3 499.12H9.200M0 501.87H9.200M3 504.63H9.200M3 507.39H9.200M3 510.15H9.200M3 512.90H9.200M0 515.66H9.200M3 518.42H9.200M3 521.17H9.200M3 523.93H9.200M3 526.69H9.200M0 529.44H9.200M3 532.20H9.200M3 534.96H9.200M3 537.72H9.200M3 540.47H9.200M0 543.23H9.200M3 545.99H9.200M3 548.74H9.200M3 551.50H9.200M3 554.26H9.200M0 557.01H9.200M3 559.77H9.200M3 562.53H9.200M3 565.29H9.200M3 568.04H9.200M0 570.80H9.200M3 573.56H9.200M3 576.31H9.200M3 579.07H9.200M3 581.83H9.200M0 584.58H9.200M3 587.34H9.200M3 590.10H9.200M3 592.86H9.200M3 595.61H9.200M0 598.37H9.200M3 601.13H9.200M3 603.88H9.200M3 606.64H9.200M3 609.40H9.200M0 612.15H9.200M3 614.91H9.200M3 617.67H9.200M3 620.43H9.200M3 623.18H9.200M0 625.94H9.200M3 628.70H9.200M3 631.45H9.200M3 634.21H9.200M3 636.97H9.200M0 639.72H9.200M3 642.48H9.200M3 645.24H9.200M3 648.00H9.200M3 650.75H9.200M0 653.51H9.200" stroke="#000" stroke-width="1.400" fill="none"/><rect x="0" y="407.18" width="0.900" height="3.500" fill="#5060b0"/><rect x="0" y="434.75" width="0.900" height="3.500" fill="#5060b0"/><rect x="0" y="462.32" width="0.900" height="3.500" fill="#5060b0"/><rect x="0" y="489.89" width="0.900" height="3.500" fill="#5060b0"/><rect x="0" y="517.46" width="0.900" height="3.500" fill="#5060b0"/><rect x="0" y="545.03" width="0.900" height="3.500" fill="#5060b0"/><rect x="0" y="572.60" width="0.900" height="3.500" fill="#5060b0"/><rect x="0" y="600.17" width="0.900" height="3.500" fill="#5060b0"/><rect x="0" y="627.74" width="0.900" height="3.500" fill="#5060b0"/><rect x="0" y="655.31" width="0.900" height="3.500" fill="#5060b0"/></svg>
<div style="left:80.8px;top:115.7px;width:688.7px;height:454.1px;background:#f0f0f0;border:1px solid #b4b4b4;box-shadow:0 3px 14px rgba(0,0,0,.28),0 0 3px rgba(0,0,0,.12);"></div>
<div class="" style="left:81.8px;top:116.7px;width:686.7px;height:25.3px;background:#fff;"></div>
<span class="t " style="left:85.40px;top:123.44px;font-size:12px;line-height:12px;color:#9b9b9b;letter-spacing:-0.279px;">Schneiden</span>
<svg width="12" height="12" viewBox="0 0 12 12" style="left:748px;top:123px"><path d="M0.700 1.200L11.300 11M11.300 1.200L0.700 11" stroke="#8c8c8c" stroke-width="1.100" fill="none"/></svg>
<div class="grp" style="left:93px;top:152.7px;width:417.5px;height:26.8px;"></div>
<div class="btn" style="left:92.5px;top:157px;width:113.5px;height:23px;"></div>
<span class="t " style="left:100.50px;top:162.87px;font-size:11.5px;line-height:11.5px;color:#000;transform:scaleX(0.9053);">Gerät zum Bildhauen</span>
<div class="sunk" style="left:212.5px;top:157.3px;width:196.5px;height:20px;"></div>
<span class="t " style="left:217.70px;top:162.87px;font-size:11.5px;line-height:11.5px;color:#000;transform:scaleX(0.9273);">Refine MH721(DMPL)</span>
<div class="dd" style="left:391px;top:159.3px;width:16px;height:16px;"></div>
<div class="btn" style="left:414px;top:157px;width:92.7px;height:23px;"></div>
<span class="t " style="left:422.70px;top:162.87px;font-size:11.5px;line-height:11.5px;color:#000;transform:scaleX(0.9075);">Geräteinstellung</span>
<span class="t " style="left:111.20px;top:189.57px;font-size:11.5px;line-height:11.5px;color:#000;transform:scaleX(0.9228);">Verbinden</span>
<div class="sunk" style="left:163px;top:186px;width:117px;height:20px;"></div>
<span class="t " style="left:167.70px;top:191.67px;font-size:11.5px;line-height:11.5px;color:#000;transform:scaleX(0.8818);">COM4</span>
<div class="dd" style="left:262px;top:188px;width:16px;height:16px;"></div>
<div class="btn" style="left:294px;top:186px;width:110px;height:22px;"></div>
<span class="t " style="left:316.00px;top:190.87px;font-size:11.5px;line-height:11.5px;color:#000;transform:scaleX(0.9273);">Schnittstelle</span>
<div class="" style="left:93px;top:213.5px;width:327px;height:127.5px;background:#fff;"></div>
<svg width="28" height="28" viewBox="0 0 28 28" style="left:92px;top:313px">
<rect x="1.400" y="1.200" width="24.400" height="24.900" fill="#fff" stroke="#ff0000" stroke-width="1.100"/>
<path d="M7.300 2.200H20.700L16.500 10.800 25.800 7.500V20.500L16.500 17.200 20.700 25.300H7.300L11 17.200 2.400 20.500V7.500L11 10.800z" fill="#fff" stroke="#000" stroke-width="2"/>
<path d="M10 4.500l2.500 5M17.500 4.500l-2 4M11 22l2-4M17 22l-1.500-3" fill="none" stroke="#000" stroke-width="1.200"/>
<path d="M12.800 8.500v9" stroke="#ff0000" stroke-width="1.300"/>
<rect x="6" y="13.500" width="9.200" height="8.800" fill="none" stroke="#0000ff" stroke-width="1.100"/>
</svg>
<div class="" style="left:93px;top:213.5px;width:327px;height:127.5px;border:1.200px solid #0000ff;"></div>
<div class="" style="left:93px;top:341px;width:327px;height:14px;background:#f7f7f7;background-image:repeating-conic-gradient(#fff 0 25%,#e8e8e8 0 50%);background-size:2px 2px;"></div>
<div class="dd" style="left:93px;top:341px;width:16px;height:14px;"></div>
<svg width="16" height="14" viewBox="0 0 16 14" style="left:93px;top:341px"><rect x="1" y="1" width="13" height="11" fill="#f0f0f0"/><path d="M9 3.500v6l-3-3z" fill="#000"/></svg>
<div class="dd nd" style="left:109px;top:341px;width:16.5px;height:14px;"></div>
<div class="grp" style="left:93px;top:365px;width:327px;height:84.5px;"></div>
<div class="" style="left:100.9px;top:360px;width:67.4px;height:11px;background:#f0f0f0;"></div>
<span class="t " style="left:102.90px;top:359.47px;font-size:11.5px;line-height:11.5px;color:#000;transform:scaleX(0.8936);">Materialgröße</span>
<div class="sunk" style="left:109px;top:371px;width:221px;height:18.5px;"></div>
<span class="t " style="left:113.60px;top:375.67px;font-size:11.5px;line-height:11.5px;color:#000;transform:scaleX(0.8788);">600mm</span>
<div class="dd" style="left:312px;top:373px;width:16px;height:14.5px;"></div>
<span class="t " style="left:113.60px;top:400.17px;font-size:11.5px;line-height:11.5px;color:#000;transform:scaleX(0.8695);">Breite:</span>
<div class="sunk" style="left:150px;top:394px;width:180px;height:19px;background:#fff;"></div>
<span class="t " style="left:153.50px;top:398.27px;font-size:11.5px;line-height:11.5px;color:#000;transform:scaleX(0.8990);">58</span>
<span class="t " style="left:113.60px;top:423.47px;font-size:11.5px;line-height:11.5px;color:#000;transform:scaleX(0.9193);">Länge</span>
<div class="sunk" style="left:150px;top:420px;width:180px;height:18.5px;background:#fff;"></div>
<span class="t " style="left:153.50px;top:424.77px;font-size:11.5px;line-height:11.5px;color:#000;transform:scaleX(0.9420);">1500</span>
<div class="grp" style="left:93px;top:460px;width:136px;height:88.5px;"></div>
<div class="" style="left:100.9px;top:455px;width:99.7px;height:11px;background:#f0f0f0;"></div>
<span class="t " style="left:102.90px;top:455.27px;font-size:11.5px;line-height:11.5px;color:#000;transform:scaleX(0.9018);">Bereich zur Ausgabe</span>
<span class="t " style="left:112.40px;top:478.57px;font-size:11.5px;line-height:11.5px;color:#000;transform:scaleX(0.9001);">Seiten-Nr.:</span>
<div class="sunk" style="left:161.5px;top:472px;width:59.3px;height:19px;background:#fff;"></div>
<span class="t " style="left:166.00px;top:476.67px;font-size:11.5px;line-height:11.5px;color:#000;">1</span>
<div class="dd spn" style="left:203.3px;top:474px;width:15.5px;height:7.5px;"></div>
<div class="dd spn" style="left:203.3px;top:481.5px;width:15.5px;height:7.5px;"></div>
<svg width="15.5" height="15" viewBox="0 0 15.5 15" style="left:203.3px;top:474px"><path d="M5.300 4.95h4.400l-2.200-2.200zM5.300 10.45h4.400l-2.200 2.200z" fill="#000"/></svg>
<span class="t " style="left:123.40px;top:502.57px;font-size:11.5px;line-height:11.5px;color:#000;transform:scaleX(0.8983);">Bereich:</span>
<div class="sunk" style="left:161.5px;top:496.3px;width:64px;height:19.4px;"></div>
<span class="t " style="left:166.00px;top:501.27px;font-size:11.5px;line-height:11.5px;color:#000;">1</span>
<div class="dd" style="left:207.5px;top:498.3px;width:16px;height:15.4px;"></div>
<span class="t " style="left:135.50px;top:523.57px;font-size:11.5px;line-height:11.5px;color:#000;transform:scaleX(0.8773);">Fuge:</span>
<div class="sunk" style="left:161.5px;top:517px;width:64px;height:20px;"></div>
<span class="t " style="left:165.60px;top:521.97px;font-size:11.5px;line-height:11.5px;color:#000;transform:scaleX(0.8295);">0mm</span>
<div class="dd" style="left:207.5px;top:519px;width:16px;height:16px;"></div>
<div class="" style="left:236.5px;top:470px;width:74.7px;height:74.8px;background:#fff;"></div>
<svg width="58" height="75" viewBox="0 0 58 75" style="left:244.500px;top:470px">
<defs><pattern id="hx" width="8.700" height="8.700" patternUnits="userSpaceOnUse"><path d="M0 0L8.700 8.700M8.700 0L0 8.700" stroke="#bcbcbc" stroke-width="0.900"/></pattern></defs>
<rect x="0.500" y="-2" width="56" height="76" fill="#f2f2f2"/>
<rect x="0.500" y="-2" width="56" height="76" fill="url(#hx)" stroke="#000"/>
<g transform="translate(0,3.300)"><path d="M11 10v18.200l10-4-3.500 9.500h17L31 24.200l11 4V10" fill="#fff" stroke="#000" stroke-width="1.500"/>
<path d="M24 22l-3 9.200h11l-3-9.200" fill="none" stroke="#000" stroke-width="1"/></g>
</svg>
<div class="" style="left:309.6px;top:489.5px;width:1.1px;height:13.5px;background:#000;"></div>
<div class="grp" style="left:317.5px;top:484px;width:247.3px;height:69.3px;"></div>
<div class="" style="left:325px;top:479px;width:94px;height:11px;background:#f0f0f0;"></div>
<span class="t " style="left:327.00px;top:482.17px;font-size:11.5px;line-height:11.5px;color:#000;transform:scaleX(0.9200);">Farbe der Ausgabe</span>
<div class="sunk" style="left:326.5px;top:502.5px;width:13px;height:13px;"></div>
<svg width="13" height="13" viewBox="0 0 13 13" style="left:326.5px;top:502.5px"><path d="M3 6l2.500 2.700L10 3.500" stroke="#000" stroke-width="2" fill="none"/></svg>
<span class="t " style="left:345.60px;top:503.67px;font-size:11.5px;line-height:11.5px;color:#000;transform:scaleX(0.9151);">alles ausgeben</span>
<div class="sunk" style="left:326.5px;top:527.5px;width:13px;height:13px;"></div>
<span class="t " style="left:346.40px;top:528.77px;font-size:11.5px;line-height:11.5px;color:#000;transform:scaleX(0.9199);">Multi-Stift Ausgang</span>
<div class="sunk" style="left:429.3px;top:493.3px;width:84.7px;height:22.7px;"></div>
<div class="" style="left:432px;top:497px;width:31.8px;height:14.8px;background:#000;"></div>
<div class="clip" style="left:466px;top:496px;width:29.500px;height:17px;">
<span class="t " style="left:3.50px;top:2.27px;font-size:11.5px;line-height:11.5px;color:#000;transform:scaleX(0.9194);">1 black</span>
</div>
<div class="" style="left:432px;top:513px;width:63px;height:1px;background:#000;"></div>
<div class="dd" style="left:495.8px;top:495.3px;width:16.2px;height:18.7px;"></div>
<div class="sunk" style="left:441px;top:522px;width:41.5px;height:23.5px;background:#fff;"></div>
<span class="t " style="left:444.50px;top:527.07px;font-size:11.5px;line-height:11.5px;color:#000;">0</span>
<div class="dd spn" style="left:465px;top:524px;width:15.5px;height:9.75px;"></div>
<div class="dd spn" style="left:465px;top:533.75px;width:15.5px;height:9.75px;"></div>
<svg width="15.5" height="19.5" viewBox="0 0 15.5 19.5" style="left:465px;top:524px"><path d="M5.300 6.08h4.400l-2.200-2.200zM5.300 13.82h4.400l-2.200 2.200z" fill="#000"/></svg>
<div class="btn" style="left:492.3px;top:521.8px;width:70.2px;height:24.4px;"></div>
<span class="t " style="left:502.50px;top:528.57px;font-size:11.5px;line-height:11.5px;color:#000;transform:scaleX(0.9181);">bearbeiten</span>
<div class="grp" style="left:520px;top:153px;width:189.5px;height:57.5px;"></div>
<div class="" style="left:527.8px;top:148px;width:96.3px;height:11px;background:#f0f0f0;"></div>
<span class="t " style="left:529.80px;top:148.67px;font-size:11.5px;line-height:11.5px;color:#000;transform:scaleX(0.9316);">Tatsächliche Größe</span>
<span class="t " style="left:538.60px;top:171.67px;font-size:11.5px;line-height:11.5px;color:#000;transform:scaleX(0.8665);">Breite:</span>
<div class="sunk" style="left:568px;top:165.5px;width:63.5px;height:18px;background:#f0f0f0;"></div>
<span class="t " style="left:571.50px;top:169.47px;font-size:11.5px;line-height:11.5px;color:#000;transform:scaleX(0.9069);">20.8</span>
<div class="dd spn" style="left:614px;top:167.5px;width:15.5px;height:7px;"></div>
<div class="dd spn" style="left:614px;top:174.5px;width:15.5px;height:7px;"></div>
<svg width="15.5" height="14" viewBox="0 0 15.5 14" style="left:614px;top:167.5px"><path d="M5.300 4.70h4.400l-2.200-2.200zM5.300 9.70h4.400l-2.200 2.200z" fill="#000"/></svg>
<span class="t " style="left:633.40px;top:169.47px;font-size:11.5px;line-height:11.5px;color:#000;transform:scaleX(0.8387);">CM</span>
<span class="t " style="left:540.50px;top:192.37px;font-size:11.5px;line-height:11.5px;color:#000;transform:scaleX(0.8766);">Höhe:</span>
<div class="sunk" style="left:568px;top:186px;width:63.5px;height:18px;background:#f0f0f0;"></div>
<span class="t " style="left:571.50px;top:190.07px;font-size:11.5px;line-height:11.5px;color:#000;transform:scaleX(0.9069);">29.5</span>
<div class="dd spn" style="left:614px;top:188px;width:15.5px;height:7px;"></div>
<div class="dd spn" style="left:614px;top:195px;width:15.5px;height:7px;"></div>
<svg width="15.5" height="14" viewBox="0 0 15.5 14" style="left:614px;top:188px"><path d="M5.300 4.70h4.400l-2.200-2.200zM5.300 9.70h4.400l-2.200 2.200z" fill="#000"/></svg>
<span class="t " style="left:633.40px;top:190.07px;font-size:11.5px;line-height:11.5px;color:#000;transform:scaleX(0.8387);">CM</span>
<div class="grp" style="left:520px;top:226px;width:189.5px;height:64.5px;"></div>
<div class="btn" style="left:615px;top:319px;width:105px;height:23.5px;"></div>
<span class="t " style="left:657.85px;top:325.47px;font-size:11.5px;line-height:11.5px;color:#000;transform:scaleX(0.9150);">Test</span>
<div class="btn" style="left:615px;top:357px;width:105px;height:23.5px;"></div>
<span class="t " style="left:642.63px;top:363.47px;font-size:11.5px;line-height:11.5px;color:#000;transform:scaleX(0.9150);">Schneiden</span>
<div class="btn" style="left:615px;top:394px;width:105px;height:23.5px;"></div>
<span class="t " style="left:655.21px;top:400.47px;font-size:11.5px;line-height:11.5px;color:#000;transform:scaleX(0.9150);">Ende</span>
<div class="tbp" style="left:615px;top:431px;width:103px;height:22.5px;background:#f8f8f8;background-image:repeating-conic-gradient(#fff 0 25%,#efefef 0 50%);background-size:2px 2px;"></div>
<span class="t " style="left:631.07px;top:437.37px;font-size:11.5px;line-height:11.5px;color:#000;transform:scaleX(0.9150);">Matrix kopieren</span>
<span class="t " style="left:645.59px;top:467.27px;font-size:11.5px;line-height:11.5px;color:#000;transform:scaleX(0.9150);">Kopie</span>
<div class="sunk" style="left:675px;top:461px;width:41px;height:19.5px;background:#fff;"></div>
<span class="t " style="left:679.00px;top:465.37px;font-size:11.5px;line-height:11.5px;color:#000;">1</span>
<div class="dd spn" style="left:698.5px;top:463px;width:15.5px;height:7.75px;"></div>
<div class="dd spn" style="left:698.5px;top:470.75px;width:15.5px;height:7.75px;"></div>
<svg width="15.5" height="15.5" viewBox="0 0 15.5 15.5" style="left:698.5px;top:463px"><path d="M5.300 5.08h4.400l-2.200-2.200zM5.300 10.82h4.400l-2.200 2.200z" fill="#000"/></svg>
<span class="t " style="left:585.00px;top:493.27px;font-size:11.5px;line-height:11.5px;color:#000;transform:scaleX(0.9091);">Abstand horizontal</span>
<div class="sunk" style="left:675px;top:488px;width:52.5px;height:19px;background:#fff;"></div>
<span class="t " style="left:679.00px;top:492.87px;font-size:11.5px;line-height:11.5px;color:#000;">0</span>
<div class="dd spn" style="left:710px;top:490px;width:15.5px;height:7.5px;"></div>
<div class="dd spn" style="left:710px;top:497.5px;width:15.5px;height:7.5px;"></div>
<svg width="15.5" height="15" viewBox="0 0 15.5 15" style="left:710px;top:490px"><path d="M5.300 4.95h4.400l-2.200-2.200zM5.300 10.45h4.400l-2.200 2.200z" fill="#000"/></svg>
<span class="t " style="left:728.00px;top:492.87px;font-size:11.5px;line-height:11.5px;color:#000;transform:scaleX(0.8387);">CM</span>
<span class="t " style="left:588.00px;top:517.87px;font-size:11.5px;line-height:11.5px;color:#000;transform:scaleX(0.9145);">vertikaler Abstand</span>
<div class="sunk" style="left:675px;top:516.5px;width:52.5px;height:19.5px;background:#fff;"></div>
<span class="t " style="left:679.00px;top:521.47px;font-size:11.5px;line-height:11.5px;color:#000;">0</span>
<div class="dd spn" style="left:710px;top:518.5px;width:15.5px;height:7.75px;"></div>
<div class="dd spn" style="left:710px;top:526.25px;width:15.5px;height:7.75px;"></div>
<svg width="15.5" height="15.5" viewBox="0 0 15.5 15.5" style="left:710px;top:518.5px"><path d="M5.300 5.08h4.400l-2.200-2.200zM5.300 10.82h4.400l-2.200 2.200z" fill="#000"/></svg>
<span class="t " style="left:728.00px;top:521.47px;font-size:11.5px;line-height:11.5px;color:#000;transform:scaleX(0.8387);">CM</span>
<div style="left:182px;top:197.5px;width:485.5px;height:292px;background:#f0f0f0;border:1px solid #6e6e6e;box-shadow:5px 5px 18px rgba(0,0,0,.46),0 0 3px rgba(0,0,0,.22);"></div>
<div class="" style="left:183px;top:198.5px;width:483.5px;height:24.3px;background:#fff;"></div>
<span class="t " style="left:186.30px;top:204.14px;font-size:12px;line-height:12px;color:#000;letter-spacing:-0.075px;">Gerät konfigurieren</span>
<svg width="12" height="12" viewBox="0 0 12 12" style="left:646.200px;top:204px"><path d="M1 1.200L11 10.800M11 1.200L1 10.800" stroke="#000" stroke-width="1.150" fill="none"/></svg>
<div class="" style="left:189.5px;top:250px;width:471.5px;height:202.5px;background:#f0f0f0;border:1px solid;border-color:#fff #6d6d6d #6d6d6d #fff;box-shadow:inset -1px -1px 0 #a5a5a5;"></div>
<div style="left:191px;top:233.5px;width:148px;height:16.8px;background:#f0f0f0;border:1px solid;border-color:#fff #6d6d6d #f0f0f0 #fff;border-bottom:0;border-radius:2px 2px 0 0;box-shadow:inset -1px 0 0 #a5a5a5;"></div>
<span class="t " style="left:197.10px;top:236.87px;font-size:11.5px;line-height:11.5px;color:#000;transform:scaleX(0.9024);">Einstellung für Kompensation</span>
<div style="left:339px;top:233.5px;width:108.5px;height:16.8px;background:#f0f0f0;border:1px solid;border-color:#fff #6d6d6d #f0f0f0 #fff;border-bottom:0;border-radius:2px 2px 0 0;box-shadow:inset -1px 0 0 #a5a5a5;"></div>
<span class="t " style="left:345.10px;top:236.87px;font-size:11.5px;line-height:11.5px;color:#000;transform:scaleX(0.9183);">Breite und Nullpunkt</span>
<div style="left:445.7px;top:230.3px;width:99.3px;height:21px;background:#f0f0f0;border:1px solid;border-color:#fff #6d6d6d #f0f0f0 #fff;border-bottom:0;border-radius:2px 2px 0 0;box-shadow:inset -1px 0 0 #a5a5a5;"></div>
<span class="t " style="left:453.30px;top:235.27px;font-size:11.5px;line-height:11.5px;color:#000;transform:scaleX(0.9015);">Einstellung Befehl</span>
<span class="t " style="left:228.20px;top:264.77px;font-size:11.5px;line-height:11.5px;color:#000;transform:scaleX(0.8760);">Initialisierung</span>
<div class="sunk" style="left:292px;top:263px;width:190.5px;height:18.5px;background:#fff;"></div>
<div class="" style="left:294.6px;top:266px;width:98px;height:13.9px;background:#0078d7;"></div>
<span class="t " style="left:295.50px;top:268.47px;font-size:11.5px;line-height:11.5px;color:#fff;transform:scaleX(0.9357);">;:H A L0 ECN U V10</span>
<div class="" style="left:392px;top:266px;width:1px;height:14.3px;background:#f08030;"></div>
<span class="t " style="left:210.20px;top:293.07px;font-size:11.5px;line-height:11.5px;color:#000;transform:scaleX(0.9238);">Schneide heben</span>
<div class="sunk" style="left:292px;top:291px;width:60px;height:18.5px;background:#fff;"></div>
<span class="t " style="left:295.50px;top:295.27px;font-size:11.5px;line-height:11.5px;color:#000;">U</span>
<span class="t " style="left:231.50px;top:321.27px;font-size:11.5px;line-height:11.5px;color:#000;transform:scaleX(0.8952);">Messer weg</span>
<div class="sunk" style="left:292px;top:319px;width:60px;height:18.5px;background:#fff;"></div>
<span class="t " style="left:295.50px;top:323.27px;font-size:11.5px;line-height:11.5px;color:#000;">D</span>
<span class="t " style="left:223.20px;top:347.57px;font-size:11.5px;line-height:11.5px;color:#000;transform:scaleX(0.9212);">Trennzeichen</span>
<div class="sunk" style="left:292px;top:346px;width:62px;height:18.5px;background:#fff;"></div>
<span class="t " style="left:295.50px;top:349.87px;font-size:11.5px;line-height:11.5px;color:#000;">,</span>
<span class="t " style="left:223.20px;top:375.57px;font-size:11.5px;line-height:11.5px;color:#000;transform:scaleX(0.9154);">Stoppzeichen</span>
<div class="sunk" style="left:292px;top:374px;width:62px;height:18.5px;background:#fff;"></div>
<span class="t " style="left:442.80px;top:293.07px;font-size:11.5px;line-height:11.5px;color:#000;transform:scaleX(0.9254);">zurücksetzen</span>
<div class="sunk" style="left:509.5px;top:291px;width:60.5px;height:18.5px;background:#fff;"></div>
<span class="t " style="left:513.00px;top:295.47px;font-size:11.5px;line-height:11.5px;color:#000;">@</span>
<span class="t " style="left:452.00px;top:321.27px;font-size:11.5px;line-height:11.5px;color:#000;transform:scaleX(0.9194);">Seitenende</span>
<div class="sunk" style="left:509.5px;top:319px;width:60.5px;height:18.5px;background:#fff;"></div>
<span class="t " style="left:513.00px;top:323.27px;font-size:11.5px;line-height:11.5px;color:#000;transform:scaleX(0.8799);">U F</span>
<span class="t " style="left:411.40px;top:347.57px;font-size:11.5px;line-height:11.5px;color:#000;transform:scaleX(0.9317);">Druck der Schneide</span>
<div class="sunk" style="left:509.5px;top:346px;width:62px;height:18.5px;background:#fff;"></div>
<span class="t " style="left:362.00px;top:375.57px;font-size:11.5px;line-height:11.5px;color:#000;transform:scaleX(0.9276);">Geschwindigkeit der Schneide</span>
<div class="sunk" style="left:509.5px;top:374px;width:62px;height:18.5px;background:#fff;"></div>
<div class="" style="left:342.5px;top:459px;width:75.5px;height:23px;background:#3c3c3c;"></div>
<div class="btn" style="left:343.5px;top:460px;width:73.5px;height:21px;"></div>
<span class="t " style="left:371.00px;top:464.87px;font-size:11.5px;line-height:11.5px;color:#000;transform:scaleX(1.0231);">OK</span>
<div class="btn" style="left:424px;top:459px;width:74.5px;height:23px;"></div>
<span class="t " style="left:434.70px;top:464.87px;font-size:11.5px;line-height:11.5px;color:#000;transform:scaleX(0.9258);">Abbrechen</span>
<div class="btn" style="left:504.5px;top:459px;width:75.5px;height:23px;"></div>
<span class="t " style="left:515.00px;top:464.87px;font-size:11.5px;line-height:11.5px;color:#000;transform:scaleX(0.9144);">Hinzufügen</span>
<div class="btn" style="left:586px;top:459px;width:75px;height:23px;"></div>
<span class="t " style="left:598.00px;top:464.87px;font-size:11.5px;line-height:11.5px;color:#000;transform:scaleX(0.9024);">Bearbeiten</span>
</body></html>
